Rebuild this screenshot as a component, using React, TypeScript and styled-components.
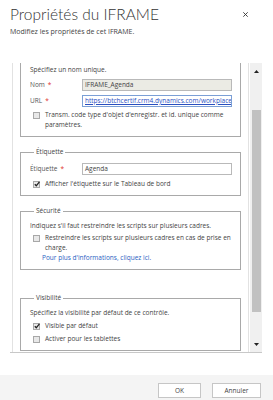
import React, { useLayoutEffect, useRef } from 'react';
import styled, { createGlobalStyle } from 'styled-components';

const GlobalStyle = createGlobalStyle`
  html, body {
    margin: 0;
    padding: 0;
    background: #fff;
  }
  body {
    font-family: "Open Sans", "Noto Sans", sans-serif;
    color: #444;
  }
`;

const Dialog = styled.div`
  width: 273px;
  height: 400px;
  display: flex;
  flex-direction: column;
  overflow: hidden;
`;

const Header = styled.div`
  padding: 4px 25px 0 10px;
`;

const TitleRow = styled.div`
  display: flex;
  align-items: center;
  justify-content: space-between;
`;

const Title = styled.h1`
  margin: 0;
  font-family: Lato, "Open Sans", sans-serif;
  font-weight: 300;
  font-size: 15.5px;
  line-height: 20px;
  color: #333;
`;

const Close = styled.svg`
  width: 5px;
  height: 5px;
`;

const Subtitle = styled.div`
  margin-top: 3px;
  font-size: 7px;
  line-height: 10px;
  color: #444;
`;

const Viewport = styled.div`
  margin: 26px 11px 0 10px;
  height: 289px;
  display: flex;
  border-bottom: 1px solid #c8c8c8;
`;

const ScrollArea = styled.div`
  flex: 1;
  overflow: hidden;
`;

const Section = styled.div`
  margin-left: 2px;
  padding: 0 7px 40px 7px;
  border-left: 1px solid #e2e2e2;
  border-right: 1px solid #e2e2e2;
`;

const Box = styled.fieldset<{ $gap?: number; $top?: number; $bottom?: number }>`
  margin: 0 0 ${p => p.$gap ?? 10}px 0;
  padding: ${p => p.$top ?? 5}px 7px ${p => p.$bottom ?? 6}px 9px;
  border: 1px solid #a9a9a9;
  min-width: 0;
`;

const Legend = styled.legend`
  margin-left: 4px;
  padding: 0 2px;
  font-size: 6.5px;
  line-height: 10px;
  color: #444;
`;

const Text = styled.div<{ $indent?: boolean; $link?: boolean; $top?: number }>`
  font-size: 6.5px;
  line-height: 10px;
  margin-top: ${p => p.$top ?? 0}px;
  padding-left: ${p => (p.$indent ? 12 : 0)}px;
  color: ${p => (p.$link ? '#2a62c2' : '#444')};
`;

const FieldRow = styled.div<{ $top?: number }>`
  display: grid;
  grid-template-columns: 52px 150px;
  align-items: center;
  margin-top: ${p => p.$top ?? 0}px;
`;

const Label = styled.div`
  font-size: 6.5px;
  line-height: 10px;
  color: #555;
`;

const Req = styled.span`
  color: #e0302c;
  margin-left: 3px;
`;

const Input = styled.div<{ $disabled?: boolean; $focus?: boolean; $link?: boolean }>`
  height: 10px;
  padding: 0 2px;
  border: 1px solid ${p => (p.$focus ? '#7b9fd6' : '#b9b9b9')};
  background: ${p => (p.$disabled ? '#ebebe4' : '#fff')};
  font-size: 6.5px;
  line-height: 10px;
  white-space: nowrap;
  overflow: hidden;
  color: ${p => (p.$link ? '#2a4fbf' : '#444')};
  text-decoration: ${p => (p.$link ? 'underline' : 'none')};
`;

const CheckRow = styled.div<{ $top?: number }>`
  display: flex;
  align-items: flex-start;
  gap: 5px;
  margin-top: ${p => p.$top ?? 0}px;
  padding-left: 3px;
`;

const CheckBox = styled.span`
  flex: none;
  width: 5px;
  height: 5px;
  margin-top: 2px;
  border: 1px solid #a8a8a8;
  background: #e8e8e8;
  position: relative;
`;

const CheckText = styled.div`
  font-size: 6.5px;
  line-height: 10px;
  color: #444;
`;

const ScrollBar = styled.div`
  width: 12px;
  margin-left: 1px;
  background: #f0f0f0;
  display: flex;
  flex-direction: column;
`;

const Arrow = styled.div`
  height: 16px;
  display: flex;
  align-items: center;
  justify-content: center;
`;

const Track = styled.div`
  flex: 1;
  display: flex;
  justify-content: center;
`;

const Thumb = styled.div`
  width: 9px;
  height: 202px;
  margin-top: 31px;
  background: #c1c1c1;
`;

const Footer = styled.div`
  margin-top: auto;
  height: 25px;
  background: #f4f4f4;
  display: flex;
  align-items: center;
  justify-content: flex-end;
  gap: 11px;
  padding: 0 12px 0 0;
`;

const Button = styled.button<{ $w: number }>`
  width: ${p => p.$w}px;
  height: 15px;
  margin-top: 5px;
  padding: 0;
  border: 1px solid #c6c6c6;
  background: #fff;
  font-family: "Open Sans", sans-serif;
  font-size: 6.5px;
  color: #444;
`;

const Check = ({ checked }: { checked?: boolean }) => (
  <CheckBox>
    {checked && (
      <svg width="6" height="6" viewBox="0 0 6 6" style={{ position: 'absolute', left: 0, top: -1 }}>
        <path d="M0.8 3.2 L2.3 4.8 L5.4 0.8" stroke="#222" strokeWidth="1.3" fill="none" />
      </svg>
    )}
  </CheckBox>
);

export default function App() {
  const scroller = useRef<HTMLDivElement>(null);
  useLayoutEffect(() => {
    if (scroller.current) scroller.current.scrollTop = 19;
  }, []);

  return (
    <Dialog>
      <GlobalStyle />
      <Header>
        <TitleRow>
          <Title>Propriétés du IFRAME</Title>
          <Close viewBox="0 0 5 5">
            <path d="M0.3 0.3 L4.7 4.7 M4.7 0.3 L0.3 4.7" stroke="#333" strokeWidth="0.9" />
          </Close>
        </TitleRow>
        <Subtitle>Modifiez les propriétés de cet IFRAME.</Subtitle>
      </Header>

      <Viewport>
        <ScrollArea ref={scroller}>
          <Section>
            <Box $top={20} $bottom={6}>
              <Text>Spécifiez un nom unique.</Text>
              <FieldRow $top={4}>
                <Label>Nom<Req>*</Req></Label>
                <Input $disabled>IFRAME_Agenda</Input>
              </FieldRow>
              <FieldRow $top={4}>
                <Label>URL<Req>*</Req></Label>
                <Input $focus $link>https://btchcertif.crm4.dynamics.com/workplace/</Input>
              </FieldRow>
              <CheckRow $top={3}>
                <Check />
                <CheckText>Transm. code type d'objet d'enregistr. et id. unique comme paramètres.</CheckText>
              </CheckRow>
            </Box>

            <Box>
              <Legend>Étiquette</Legend>
              <FieldRow $top={1}>
                <Label>Étiquette<Req>*</Req></Label>
                <Input>Agenda</Input>
              </FieldRow>
              <CheckRow $top={4}>
                <Check checked />
                <CheckText>Afficher l'étiquette sur le Tableau de bord</CheckText>
              </CheckRow>
            </Box>

            <Box $gap={23}>
              <Legend>Sécurité</Legend>
              <Text>Indiquez s'il faut restreindre les scripts sur plusieurs cadres.</Text>
              <CheckRow $top={2}>
                <Check />
                <CheckText>Restreindre les scripts sur plusieurs cadres en cas de prise en charge.</CheckText>
              </CheckRow>
              <Text $indent $link>Pour plus d'informations, cliquez ici.</Text>
            </Box>

            <Box>
              <Legend>Visibilité</Legend>
              <Text>Spécifiez la visibilité par défaut de ce contrôle.</Text>
              <CheckRow $top={3}>
                <Check checked />
                <CheckText>Visible par défaut</CheckText>
              </CheckRow>
              <CheckRow $top={3}>
                <Check />
                <CheckText>Activer pour les tablettes</CheckText>
              </CheckRow>
            </Box>
          </Section>
        </ScrollArea>
        <ScrollBar>
          <Arrow>
            <svg width="5" height="3" viewBox="0 0 5 3"><path d="M0 3 L2.5 0 L5 3 Z" fill="#222" /></svg>
          </Arrow>
          <Track>
            <Thumb />
          </Track>
          <Arrow>
            <svg width="5" height="3" viewBox="0 0 5 3"><path d="M0 0 L2.5 3 L5 0 Z" fill="#222" /></svg>
          </Arrow>
        </ScrollBar>
      </Viewport>

      <Footer>
        <Button $w={43}>OK</Button>
        <Button $w={49}>Annuler</Button>
      </Footer>
    </Dialog>
  );
}
